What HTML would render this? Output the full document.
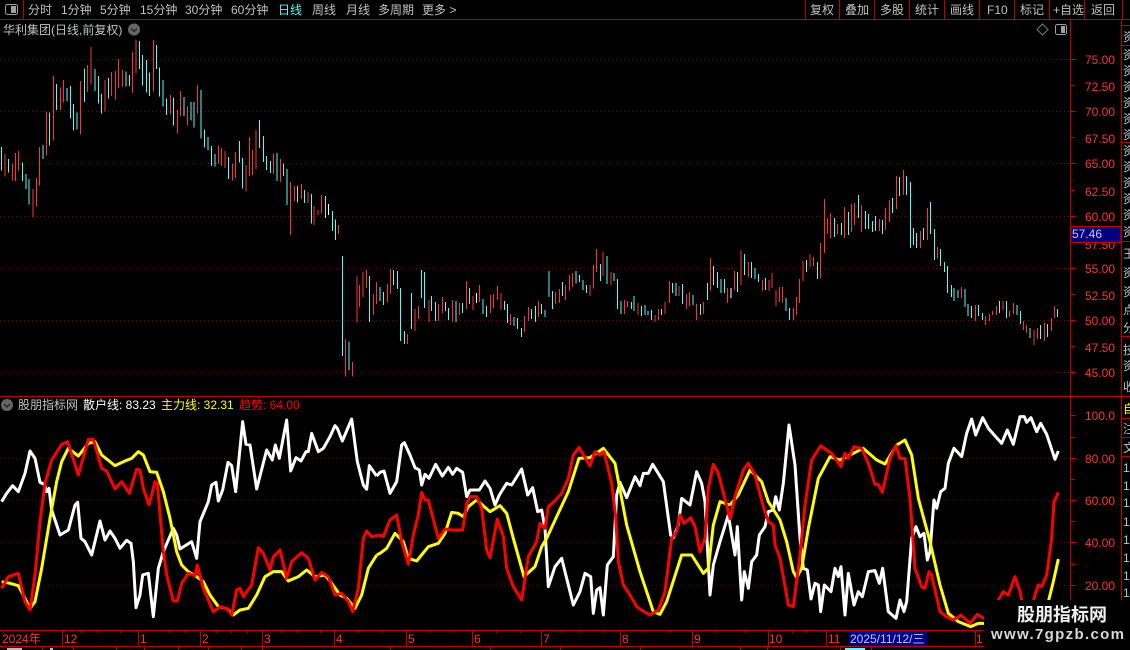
<!DOCTYPE html>
<html lang="zh"><head><meta charset="utf-8"><title>华利集团</title>
<style>
html,body{margin:0;padding:0;background:#000;width:1130px;height:650px;overflow:hidden}
svg{display:block}
text{font-family:"Liberation Sans","WenQuanYi Zen Hei","Noto Sans CJK SC",sans-serif;font-size:12px}
.t{fill:#c0c0c0}
.a{fill:#ff3232;text-anchor:start}
.c path{fill:none;stroke-width:1;vector-effect:non-scaling-stroke;shape-rendering:crispEdges}
.r{stroke:#ff3232}.y{stroke:#54fcfc}.w{stroke:#fff}
.l polyline{fill:none;stroke-width:3;stroke-linejoin:round;vector-effect:non-scaling-stroke}
</style></head><body>
<svg width="1130" height="650" viewBox="0 0 1130 650" xmlns="http://www.w3.org/2000/svg">
<defs><clipPath id="s"><rect x="1123" y="20" width="7" height="630"/></clipPath></defs>
<rect width="1130" height="650" fill="#000"/>

<!-- grid -->
<g stroke="#900000" stroke-dasharray="1 3" shape-rendering="crispEdges">
<path d="M0 59.5H1070M0 111.5H1070M0 163.5H1070M0 216.5H1070M0 268.5H1070M0 320.5H1070M0 372.5H1070"/>
<path stroke="#700000" d="M0 458.5H1070M0 500.5H1070M0 542.5H1070M0 585.5H1070"/>
</g>

<!-- candles -->
<g class="c">
<g transform="translate(0 0) scale(.36036 .33333)">
<path class="r" d="M14 462V530M34 490V542M43 459V543M52 453V513M91 567V652M101 534V620M110 441V557M129 335V467M148 228V422M168 262V330M176 240V308M223 243V404M243 195V276M253 141V254M291 240V335M310 216V288M320 213V299M329 177V264M340 210V259M367 156V279M377 120V221M426 120V275M473 285V343M492 330V401M501 273V348M520 318V377M548 255V341M606 436V490M615 444V498M625 453V504M645 492V542M654 456V534M682 495V575M692 411V528M700 450V525M711 390V507M759 462V522M778 477V546M806 546V660M817 558V603M836 552V597M855 576V609M872 618V660M883 630V645M892 585V640"/>
<path class="y" d="M4 441V512M24 477V518M62 487V543M72 522V567M81 537V614M120 435V477M138 337V437M157 252V330M186 264V303M195 258V356M204 312V392M214 338V388M234 205V306M263 207V273M273 228V310M282 282V341M301 234V295M349 215V260M360 225V258M387 123V207M396 165V256M406 180V278M415 218V288M434 135V207M443 202V290M453 240V320M462 295V345M481 292V377M511 291V348M530 306V362M539 306V383M558 270V416M567 388V442M577 411V450M587 438V498M597 462V500M634 471V537M664 423V487M673 474V566M720 360V444M731 408V486M740 468V510M750 483V519M768 459V543M787 490V528M797 507V615M826 558V608M845 570V609M865 582V660M903 588V654M922 633V660M931 658V660"/>
<path class="w" d="M912 612V645"/>
</g>
<g transform="translate(0 220) scale(.36036 .33333)">
<path class="r" d="M806 0V45M872 0V15M940 15V42M959 357V470M978 426V470M990 168V308M998 195V261M1007 156V231M1017 150V204M1036 222V285M1045 186V252M1075 192V246M1083 147V222M1131 342V372M1151 267V333M1161 258V297M1190 240V306M1217 252V303M1228 231V279M1256 240V306M1275 249V285M1294 183V267M1313 228V270M1331 195V246M1361 225V279M1370 222V264M1380 198V240M1390 219V270M1417 282V315M1456 288V336M1466 261V303M1495 243V291M1542 216V252M1552 207V249"/>
<path class="y" d="M865 0V10M922 0V33M931 0V60M950 108V408M969 365V450M1026 168V306M1055 201V243M1064 216V255M1092 150V195M1103 153V207M1112 204V363M1122 333V372M1142 219V327M1170 150V234M1178 156V264M1198 228V273M1208 246V303M1236 246V273M1245 264V300M1265 243V306M1284 249V279M1303 204V252M1341 237V282M1350 258V291M1400 243V270M1408 252V309M1427 291V318M1436 294V327M1447 324V351M1475 267V297M1486 258V306M1503 252V282M1513 270V291M1523 153V231M1533 213V267M1561 186V228"/>
<path class="w" d="M1322 219V249"/>
</g>
<g transform="translate(565 220) scale(.36036 .33333)">
<path class="r" d="M1 195V240M12 165V213M21 159V201M70 195V228M79 135V205M87 87V156M106 96V168M127 156V195M165 240V282M174 243V261M203 249V285M250 285V306M259 267V300M278 246V282M290 183V249M317 198V228M337 222V267M345 216V258M365 252V300M385 246V282M404 114V213M451 204V249M471 153V210M489 90V195M509 126V171M548 180V213M566 180V213M575 159V204M585 210V258M595 201V246M604 201V249M634 264V300M642 231V285M651 177V249M661 123V183M680 102V141M690 111V138M709 69V174M1033 81V117M1100 201V234M1139 255V303M1167 288V315M1178 282V303M1187 273V285M1197 258V285M1215 243V270M1234 273V291M1245 249V282M1273 303V330M1281 315V339M1301 330V375M1311 324V357M1330 309V363M1350 294V333M1359 258V294"/>
<path class="y" d="M31 153V190M40 165V186M50 180V210M59 195V219M98 132V183M117 108V192M136 159V183M145 177V267M155 243V282M184 246V267M192 228V273M212 258V288M222 255V285M231 273V285M240 270V300M268 267V285M298 189V219M308 189V228M326 192V252M355 225V255M376 252V285M395 189V240M412 138V195M423 156V204M433 177V219M442 177V219M478 156V216M498 102V165M518 126V174M527 144V177M537 162V186M556 174V210M613 234V273M623 264V300M670 120V156M700 126V177M1026 27V120M1042 87V138M1053 126V156M1061 138V219M1072 195V231M1080 204V243M1090 210V234M1110 207V261M1118 252V288M1128 258V294M1147 255V288M1158 279V300M1206 243V279M1225 243V294M1254 255V285M1264 273V312M1291 324V354M1320 315V357M1339 312V351M1366 267V291"/>
<path class="w" d="M461 204V234"/>
</g>
<g transform="translate(790 165) scale(.33333)">
<path class="r" d="M103 102V264M112 159V207M121 144V219M142 177V207M163 126V219M184 117V201M193 114V180M214 120V201M268 162V198M286 129V195M298 105V171M319 33V132M340 15V90M391 198V249M412 129V225"/>
<path class="y" d="M133 159V216M154 174V210M175 141V210M205 90V159M226 138V192M235 147V192M247 168V201M256 153V198M277 165V207M307 99V144M328 36V93M349 33V90M361 51V249M370 189V240M379 204V249M400 189V225M421 111V207"/>
</g>
</g>

<!-- indicator lines -->
<g class="l">
<g transform="translate(0 395) scale(.33333)">
<polyline stroke="#fff" points="5,320 20,295 38,272 55,290 75,235 90,168 105,190 120,262 133,268 140,290 147,280 155,345 165,375 180,420 205,405 225,330 233,322 243,430 255,440 275,480 300,378 315,435 330,408 345,430 360,460 380,436 393,445 400,500 408,638 420,600 428,540 445,535 460,665 475,520 490,470 520,400 530,420 540,462 575,440 590,490 600,380 625,320 635,270 648,262 655,318 668,285 684,202 695,212 707,290 728,80 738,148 750,150 770,282 800,165 817,195 826,150 838,190 860,75 872,228 888,188 903,198 918,170 925,170 935,115 955,170 970,160 990,125 1005,92 1012,100 1027,138 1055,72 1072,200 1090,270 1100,283 1108,212 1130,243"/>
</g>
<g transform="translate(380 395) scale(.33333)">
<polyline stroke="#fff" points="-10,243 0,232 12,228 30,295 50,260 65,150 73,143 90,180 105,218 118,225 125,270 135,238 147,250 167,208 187,243 205,217 218,238 230,220 248,232 260,305 270,285 298,285 315,258 330,280 345,330 358,300 380,265 395,270 425,222 443,300 458,278 473,350 485,345 495,400 505,575 525,515 545,490 580,630 600,590 615,535 632,545 640,655 650,585 660,578 670,660 682,510 700,485 710,300 720,262 740,308 765,245 780,272 790,235 805,235 818,208 850,260 872,420 880,428 895,390 905,310 930,330 950,230 965,265 975,320 990,600 1000,510 1020,440 1045,360"/>
</g>
<g transform="translate(730 395) scale(.33333)">
<polyline stroke="#fff" points="-5,360 15,480 22,395 35,615 43,530 55,580 65,500 80,480 88,420 105,395 115,350 130,345 137,305 148,345 160,265 177,90 195,210 210,430 220,520 232,525 243,612 255,565 265,570 272,650 283,570 303,590 315,520 325,545 333,515 345,660 355,535 372,630 385,590 397,605 415,530 435,527 448,565 458,520 475,650 498,670 510,615 522,650 530,620 545,430 558,395 570,425 582,415 592,495 600,470 612,315 620,340 632,290 645,280 655,205 672,160 695,185 710,115 725,72 737,120 758,68 775,100 815,145 832,105 850,148 870,65 883,65 890,82 903,68 920,110 932,85 950,118 975,193 985,168"/>
</g>
<g transform="translate(0 395) scale(.33333)">
<polyline stroke="#ffff00" points="5,560 30,565 55,572 70,600 90,640 105,620 125,520 150,370 170,260 185,200 205,160 235,183 265,145 285,140 305,180 345,212 375,198 395,190 415,170 430,180 450,230 470,232 490,290 510,370 530,470 545,510 565,530 590,545 610,560 630,600 655,635 680,640 700,660 720,645 745,640 770,600 795,545 820,530 845,530 865,558 895,545 920,525 945,545 975,540 995,565 1020,600 1040,610 1065,640 1085,600 1105,520 1130,480"/>
</g>
<g transform="translate(380 395) scale(.33333)">
<polyline stroke="#ffff00" points="-10,480 0,475 20,460 45,415 70,440 85,490 110,498 145,455 175,445 195,415 215,352 235,355 250,365 265,335 290,315 330,350 360,332 380,355 400,430 432,545 465,515 485,455 500,430 530,365 565,290 597,190 630,188 670,160 705,205 740,390 780,530 820,650 840,658 860,620 905,480 935,480 970,535 985,520 1000,390 1020,320 1050,330"/>
</g>
<g transform="translate(730 395) scale(.33333)">
<polyline stroke="#ffff00" points="0,330 25,300 60,225 95,260 115,320 150,375 170,440 190,530 200,548 215,520 235,400 265,250 300,185 330,195 370,175 400,160 440,195 465,207 500,150 525,135 545,180 565,310 600,440 630,570 655,655 685,680 722,695 745,685 780,685"/>
<polyline stroke="#ffff00" points="950,640 960,600 970,560 985,492"/>
</g>
<g transform="translate(0 395) scale(.33333)">
<polyline stroke="#ff0000" points="5,580 25,545 55,535 75,620 90,645 105,540 120,380 135,265 155,195 185,148 203,140 235,240 265,133 280,133 305,220 320,228 345,282 365,260 388,295 410,222 420,225 430,280 447,330 465,260 472,265 490,470 500,540 520,618 532,618 545,565 565,535 585,542 592,510 610,580 640,650 660,635 680,640 695,660 710,585 720,580 730,605 755,570 775,458 790,475 810,525 820,485 840,465 860,550 875,500 905,473 925,490 945,555 965,532 985,545 1005,600 1025,595 1045,620 1058,650 1075,580 1090,430 1100,408 1115,425 1140,420"/>
</g>
<g transform="translate(380 395) scale(.33333)">
<polyline stroke="#ff0000" points="0,420 10,425 30,375 50,360 65,440 85,508 100,420 115,360 125,292 135,315 145,315 175,430 195,402 215,405 248,405 260,325 270,305 290,305 305,340 320,465 330,488 352,372 370,425 380,520 400,575 425,615 445,485 470,440 480,385 495,400 505,335 520,322 545,295 565,250 580,180 597,157 630,213 645,170 660,180 672,170 695,265 707,365 715,500 730,570 750,600 770,635 790,648 810,660 835,645 855,590 875,430 890,410 900,360 912,385 932,368 945,395 960,470 975,430 985,280 1000,208 1015,235 1050,370"/>
</g>
<g transform="translate(730 395) scale(.33333)">
<polyline stroke="#ff0000" points="0,375 15,305 40,225 55,205 75,240 100,335 115,380 130,390 135,450 150,490 175,630 190,635 210,480 225,330 245,195 272,152 290,165 305,175 333,215 345,175 355,190 372,155 395,160 415,205 435,268 445,268 457,292 480,190 498,152 510,190 525,190 540,310 555,520 575,575 585,580 597,530 605,540 630,650 650,665 670,675 693,660 720,685 742,658 765,672 780,680"/>
<polyline stroke="#ff0000" points="790,660 805,615 820,590 835,600 855,545 870,590 880,640"/>
<polyline stroke="#ff0000" points="905,640 915,600 925,570 935,575 950,540 965,430 972,320 985,292"/>
</g>
</g>

<!-- frame lines -->
<g stroke="#c00000" fill="none" shape-rendering="crispEdges">
<path d="M0 19.5H1130M23.5 0V19M805.5 0V19M839.5 0V19M874.5 0V19M909.5 0V19M944.5 0V19M979.5 0V19M1014.5 0V19M1049.5 0V19M1084.5 0V19M1122.5 0V19"/>
<path d="M1070.5 20V650M1121.5 20V650M0 396.5H1122"/>
<path d="M1071 59.5H1076M1071 85.5H1075M1071 111.5H1076M1071 137.5H1075M1071 163.5H1076M1071 190.5H1075M1071 216.5H1076M1071 268.5H1076M1071 294.5H1075M1071 320.5H1076M1071 346.5H1075M1071 372.5H1076"/>
<path d="M1071 415.5H1076M1071 437.5H1075M1071 458.5H1076M1071 479.5H1075M1071 500.5H1076M1071 521.5H1075M1071 542.5H1076M1071 564.5H1075M1071 585.5H1076"/>
<path d="M1122 25.5H1130M1122 45.5H1130M1122 142.5H1130M1122 241.5H1130M1122 336.5H1130M1122 396.5H1130M1122 418.5H1130M1122 437.5H1130M1122 456.5H1130"/>
<path d="M0 630.5H1070M0 646.5H1070"/>
<path d="M62.5 631V646M138.5 631V646M200.5 631V646M262.5 631V646M334.5 631V646M406.5 631V646M472.5 631V646M541.5 631V646M620.5 631V646M692.5 631V646M768.5 631V646M826.5 631V646M975.5 631V646"/>
<path d="M81.5 631V633M97.5 631V633M120.5 631V633M169.5 631V633M185.5 631V633M216.5 631V633M231.5 631V633M247.5 631V633M281.5 631V633M297.5 631V633M320.5 631V633M358.5 631V633M381.5 631V633M429.5 631V633M453.5 631V633M496.5 631V633M520.5 631V633M562.5 631V633M580.5 631V633M603.5 631V633M645.5 631V633M670.5 631V633M716.5 631V633M745.5 631V633M792.5 631V633M806.5 631V633M1000.5 631V633"/>
<path d="M42.5 647V650M73.5 647V650M116.5 647V650M144.5 647V650M178.5 647V650M208.5 647V650M241.5 647V650M262.5 647V650M390.5 647V650M490.5 647V650M560.5 647V650M640.5 647V650M740.5 647V650M767.5 647V650M840.5 647V650M871.5 647V650"/>
</g>
<rect x="7" y="648" width="15" height="2" fill="#bbb"/><rect x="50" y="648" width="3" height="2" fill="#bbb"/><rect x="845" y="648" width="20" height="2" fill="#54fcfc"/>

<!-- toolbar -->
<rect x="5.5" y="4.5" width="12" height="10" rx="2" fill="none" stroke="#a0a0a0"/><rect x="11" y="6" width="5" height="7" fill="#a0a0a0"/>
<g class="t">
<text x="28" y="14">分时</text><text x="61" y="14">1分钟</text><text x="100" y="14">5分钟</text><text x="140" y="14">15分钟</text><text x="185" y="14">30分钟</text><text x="231" y="14">60分钟</text>
<text x="278" y="14" style="fill:#54fcfc">日线</text><text x="312" y="14">周线</text><text x="346" y="14">月线</text><text x="378" y="14">多周期</text><text x="422" y="14">更多 &gt;</text>
<text x="810" y="14">复权</text><text x="845" y="14">叠加</text><text x="880" y="14">多股</text><text x="915" y="14">统计</text><text x="950" y="14">画线</text><text x="987" y="14">F10</text><text x="1020" y="14">标记</text><text x="1053" y="14">+自选</text><text x="1091" y="14">返回</text>
<text x="3" y="34">华利集团(日线,前复权)</text>
<text x="18" y="409">股朋指标网</text>
</g>
<circle cx="134" cy="29.5" r="6" fill="#666"/><path d="M131 28.5l3 3 3-3" fill="none" stroke="#222" stroke-width="1.3"/>
<path d="M1042.5 24l5.5 5.500-5.500 5.500-5.500-5.500z" fill="none" stroke="#777"/>
<rect x="1055.500" y="24.500" width="11" height="10" rx="2" fill="none" stroke="#a0a0a0"/><rect x="1061" y="26" width="4" height="7" fill="#a0a0a0"/>
<circle cx="7" cy="405" r="6" fill="#666"/><path d="M4 404l3 3 3-3" fill="none" stroke="#222" stroke-width="1.3"/>
<text x="83" y="409" fill="#fff">散户线: 83.23</text>
<text x="161" y="409" fill="#ffff00">主力线: 32.31</text>
<text x="239" y="409" fill="#ff0000">趋势: 64.00</text>

<!-- price axis -->
<g class="a">
<text class="a" x="1085" y="64">75.00</text><text class="a" x="1085" y="91">72.50</text><text class="a" x="1085" y="116">70.00</text><text class="a" x="1085" y="143">67.50</text><text class="a" x="1085" y="168">65.00</text><text class="a" x="1085" y="196">62.50</text><text class="a" x="1085" y="221">60.00</text><text class="a" x="1085" y="249">57.50</text><text class="a" x="1085" y="273">55.00</text><text class="a" x="1085" y="300">52.50</text><text class="a" x="1085" y="325">50.00</text><text class="a" x="1085" y="352">47.50</text><text class="a" x="1085" y="377">45.00</text>
<text class="a" x="1085" y="420">100.0</text><text class="a" x="1085" y="463">80.00</text><text class="a" x="1085" y="505">60.00</text><text class="a" x="1085" y="547">40.00</text><text class="a" x="1085" y="590">20.00</text>
</g>
<rect x="1071" y="226.500" width="50" height="16" fill="#000080" stroke="#c00000" shape-rendering="crispEdges"/>
<text x="1072" y="238" fill="#c0c8ff">57.46</text>

<!-- time axis -->
<g>
<text class="a" x="2" y="643">2024年</text><text class="a" x="64" y="643">12</text><text class="a" x="140" y="643">1</text><text class="a" x="202" y="643">2</text><text class="a" x="264" y="643">3</text><text class="a" x="336" y="643">4</text><text class="a" x="408" y="643">5</text><text class="a" x="474" y="643">6</text><text class="a" x="543" y="643">7</text><text class="a" x="622" y="643">8</text><text class="a" x="694" y="643">9</text><text class="a" x="769" y="643">10</text><text class="a" x="828" y="643">11</text><text class="a" x="976" y="643">1</text>
</g>
<rect x="849" y="631" width="78" height="15" fill="#000090"/>
<text x="850" y="643" fill="#c0c8ff">2025/11/12/三</text>

<!-- right strip, clipped labels -->
<g clip-path="url(#s)" class="t">
<text x="1123" y="41">资</text>
<text x="1123" y="59">资</text><text x="1123" y="75">资</text><text x="1123" y="91">资</text><text x="1123" y="107">资</text><text x="1123" y="123">资</text><text x="1123" y="139">资</text>
<text x="1123" y="155">资</text><text x="1123" y="171">资</text><text x="1123" y="187">资</text><text x="1123" y="203">资</text><text x="1123" y="219">资</text><text x="1123" y="236">资</text>
<text x="1123" y="258">王</text><text x="1123" y="277">资</text><text x="1123" y="296">资</text><text x="1123" y="314">点</text><text x="1123" y="332">分</text>
<text x="1123" y="354">技</text><text x="1123" y="370">资</text><text x="1123" y="391">收</text>
<text x="1123" y="413" style="fill:#ffff00">自</text><text x="1123" y="433">注</text><text x="1123" y="452">文</text>
<text x="1123" y="472">1</text><text x="1123" y="490">1</text><text x="1123" y="507">1</text><text x="1123" y="526">1</text><text x="1123" y="544">1</text><text x="1123" y="562">1</text><text x="1123" y="580">1</text><text x="1123" y="597">1</text>
</g>

<!-- watermark -->
<rect x="984" y="600" width="146" height="50" fill="#000"/>
<text x="1017" y="621" fill="#f0f0f0" style="font-size:18px;font-weight:bold">股朋指标网</text>
<text x="991" y="639" fill="#d8d8d8" style="font-family:'Liberation Sans',sans-serif;font-size:15px;font-weight:bold" textLength="133" lengthAdjust="spacing">www.7gpzb.com</text>
</svg>
</body></html>
